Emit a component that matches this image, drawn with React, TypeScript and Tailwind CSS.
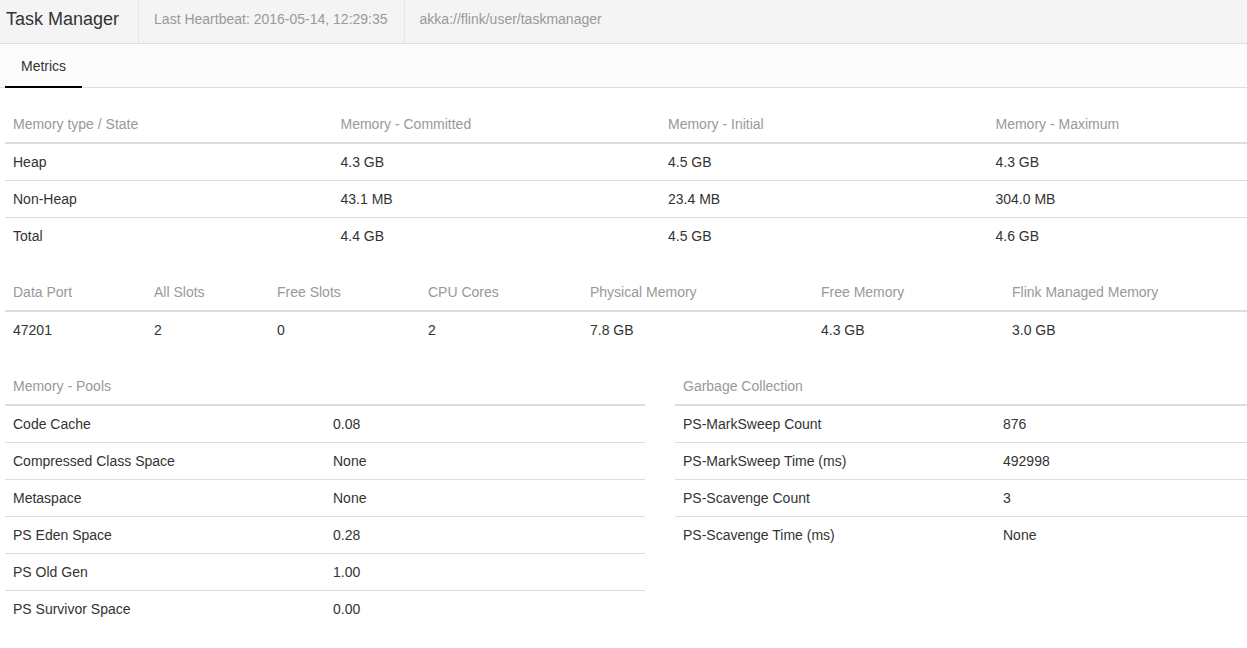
const memoryRows = [
  ['Heap', '4.3 GB', '4.5 GB', '4.3 GB'],
  ['Non-Heap', '43.1 MB', '23.4 MB', '304.0 MB'],
  ['Total', '4.4 GB', '4.5 GB', '4.6 GB'],
]

const infoCols = [
  { label: 'Data Port', value: '47201', w: 'w-[141px]' },
  { label: 'All Slots', value: '2', w: 'w-[123px]' },
  { label: 'Free Slots', value: '0', w: 'w-[151px]' },
  { label: 'CPU Cores', value: '2', w: 'w-[162px]' },
  { label: 'Physical Memory', value: '7.8 GB', w: 'w-[231px]' },
  { label: 'Free Memory', value: '4.3 GB', w: 'w-[191px]' },
  { label: 'Flink Managed Memory', value: '3.0 GB', w: 'w-[311px]' },
]

const pools = [
  ['Code Cache', '0.08'],
  ['Compressed Class Space', 'None'],
  ['Metaspace', 'None'],
  ['PS Eden Space', '0.28'],
  ['PS Old Gen', '1.00'],
  ['PS Survivor Space', '0.00'],
]

const gc = [
  ['PS-MarkSweep Count', '876'],
  ['PS-MarkSweep Time (ms)', '492998'],
  ['PS-Scavenge Count', '3'],
  ['PS-Scavenge Time (ms)', 'None'],
]

const th = 'px-2 py-2 text-left font-normal text-[#999] border-b-2 border-[#ddd]'
const td = 'px-2 py-2 text-[#333] border-t border-[#ddd]'

export default function App() {
  return (
    <div
      className="min-h-[648px] w-full overflow-hidden bg-white text-[14px] leading-5 text-[#333]"
      style={{ fontFamily: '"Liberation Sans", Arial, sans-serif' }}
    >
      <div className="w-[1320px]">
        <header className="flex h-[44px] border-b border-[#ddd] bg-[#f4f4f4]">
          <div className="flex items-center pb-[6px] pl-[6px] pr-[19px] text-[18px] text-[#333]">
            Task Manager
          </div>
          <div className="flex items-center border-l border-[#e4e4e4] pl-[15px] pr-4 pb-[6px] text-[#999]">
            Last Heartbeat: 2016-05-14, 12:29:35
          </div>
          <div className="flex items-center border-l border-[#e4e4e4] pl-[15px] pr-4 pb-[6px] text-[#999]">
            akka://flink/user/taskmanager
          </div>
        </header>

        <nav className="flex h-[44px] border-b border-[#ddd] bg-[#fcfcfc] pl-[5px]">
          <div className="relative flex items-center px-4 text-[#333]">
            Metrics
            <span className="absolute bottom-[-1px] left-0 right-0 h-[2px] bg-black" />
          </div>
        </nav>

        <div className="px-[5px] pt-[18px]">
          <table className="mb-5 w-full table-fixed border-collapse">
            <thead>
              <tr>
                <th className={th}>Memory type / State</th>
                <th className={th}>Memory - Committed</th>
                <th className={th}>Memory - Initial</th>
                <th className={th}>Memory - Maximum</th>
              </tr>
            </thead>
            <tbody>
              {memoryRows.map((row, i) => (
                <tr key={row[0]}>
                  {row.map((cell, j) => (
                    <td key={j} className={i === 0 ? 'px-2 py-2 text-[#333]' : td}>
                      {cell}
                    </td>
                  ))}
                </tr>
              ))}
            </tbody>
          </table>

          <table className="mb-5 w-full table-fixed border-collapse">
            <thead>
              <tr>
                {infoCols.map((c) => (
                  <th key={c.label} className={`${th} ${c.w}`}>
                    {c.label}
                  </th>
                ))}
              </tr>
            </thead>
            <tbody>
              <tr>
                {infoCols.map((c) => (
                  <td key={c.label} className="px-2 py-2 text-[#333]">
                    {c.value}
                  </td>
                ))}
              </tr>
            </tbody>
          </table>

          <div className="grid grid-cols-2 items-start gap-[30px]">
            <KeyValueTable title="Memory - Pools" rows={pools} />
            <KeyValueTable title="Garbage Collection" rows={gc} />
          </div>
        </div>
      </div>
    </div>
  )
}

function KeyValueTable({ title, rows }: { title: string; rows: string[][] }) {
  return (
    <table className="mb-5 w-full table-fixed border-collapse">
      <thead>
        <tr>
          <th className={`${th} w-[320px]`}>{title}</th>
          <th className={th}></th>
        </tr>
      </thead>
      <tbody>
        {rows.map(([k, v], i) => (
          <tr key={k}>
            <td className={i === 0 ? 'px-2 py-2 text-[#333]' : td}>{k}</td>
            <td className={i === 0 ? 'px-2 py-2 text-[#333]' : td}>{v}</td>
          </tr>
        ))}
      </tbody>
    </table>
  )
}
